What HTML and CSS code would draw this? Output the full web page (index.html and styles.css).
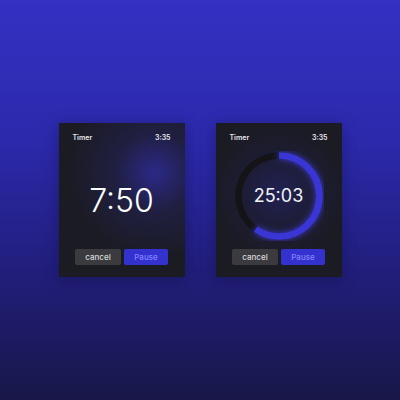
FILE: index.html
```html
<!DOCTYPE html>
<html lang="en">
<head>
    <meta charset="UTF-8">
    <meta name="viewport" content="width=device-width, initial-scale=1.0">
    <title>Watch Timer</title>
    <link rel="stylesheet" href="styles.css">
</head>
<body>

    <div class="screens">
        <!-- plain countdown -->
        <div class="watch glow-corner">
            <div class="status">
                <span>Timer</span>
                <span>3:35</span>
            </div>
            <div class="face">
                <div class="big-time">7:50</div>
            </div>
            <div class="actions">
                <button class="btn btn-cancel">cancel</button>
                <button class="btn btn-pause">Pause</button>
            </div>
        </div>

        <!-- countdown with progress ring -->
        <div class="watch glow-center">
            <div class="status">
                <span>Timer</span>
                <span>3:35</span>
            </div>
            <div class="face">
                <div class="ring">
                    <svg width="90" height="90" viewBox="0 0 90 90">
                        <circle cx="45" cy="45" r="40.5" fill="none" stroke="#141417" stroke-width="6.5"/>
                        <circle class="ring-progress" cx="45" cy="45" r="40.5" fill="none" stroke="#3a36d6" stroke-width="6.5"
                                stroke-dasharray="152 255" transform="rotate(-90 45 45)"/>
                    </svg>
                    <div class="ring-time">25:03</div>
                </div>
            </div>
            <div class="actions">
                <button class="btn btn-cancel">cancel</button>
                <button class="btn btn-pause">Pause</button>
            </div>
        </div>
    </div>

</body>
</html>
```

FILE: styles.css
```css
html, body {
    height: 100%;
}
body {
    margin: 0;
    font-family: Inter, "Noto Sans", sans-serif;
    background: linear-gradient(180deg, #3431c3 0%, #2c29ac 35%, #221f80 65%, #181748 100%);
    display: flex;
    justify-content: center;
    padding-top: 123px;
    box-sizing: border-box;
}
.screens {
    display: flex;
    gap: 31px;
}
.watch {
    width: 126px;
    height: 154px;
    background-color: #1b1b23;
    box-shadow: 0 2px 14px rgba(10, 10, 40, 0.35);
    display: flex;
    flex-direction: column;
    box-sizing: border-box;
    padding: 10px 14px 12px 14px;
}
.glow-corner {
    background: radial-gradient(circle at 76% 32%, rgba(52, 48, 190, 0.65) 0%, rgba(40, 38, 120, 0.35) 28%, rgba(27, 27, 35, 0) 62%), #1b1b23;
}
.glow-center {
    background: radial-gradient(circle at 50% 45%, rgba(40, 38, 130, 0.5) 0%, rgba(30, 30, 80, 0.3) 40%, rgba(27, 27, 35, 0) 66%), #1b1b23;
}
.status {
    display: flex;
    justify-content: space-between;
    font-size: 7px;
    font-weight: 600;
    color: #e8e8ee;
}
.face {
    flex: 1;
    display: flex;
    align-items: center;
    justify-content: center;
}
.big-time {
    font-size: 32px;
    font-weight: 300;
    color: #ffffff;
    margin-top: 9px;
}
.ring {
    position: relative;
    width: 90px;
    height: 90px;
}
.ring svg {
    display: block;
}
.ring-progress {
    filter: drop-shadow(0 0 3px rgba(70, 66, 255, 0.8));
}
.ring-time {
    position: absolute;
    inset: 0;
    display: flex;
    align-items: center;
    justify-content: center;
    font-size: 18px;
    color: #f2f2f6;
}
.actions {
    display: flex;
    justify-content: center;
    gap: 3px;
}
.btn {
    height: 16px;
    border: none;
    border-radius: 2px;
    font-family: Inter, "Noto Sans", sans-serif;
    font-size: 8px;
    font-weight: 500;
    padding: 0;
    cursor: pointer;
}
.btn-cancel {
    width: 46px;
    background-color: #3b3b3f;
    color: #d8d8dc;
}
.btn-pause {
    width: 44px;
    background-color: #3432cf;
    color: #8482ff;
}
```
